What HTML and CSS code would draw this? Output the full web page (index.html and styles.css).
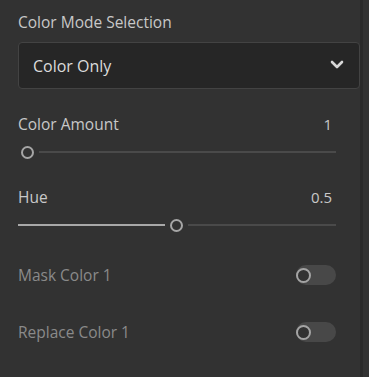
FILE: index.html
```html
<!DOCTYPE html>
<html lang="en">
<head>
    <meta charset="UTF-8">
    <title>Color Mode Panel</title>
    <link rel="stylesheet" href="styles.css">
</head>
<body>
    <div class="panel">
        <!-- Color mode dropdown -->
        <div class="field">
            <div class="label">Color Mode Selection</div>
            <div class="dropdown">
                <span>Color Only</span>
                <svg class="chevron" width="14" height="9" viewBox="0 0 14 9">
                    <path d="M2 2 L7 7 L12 2" fill="none" stroke="#d8d8d8" stroke-width="2.6" stroke-linecap="round" stroke-linejoin="round"/>
                </svg>
            </div>
        </div>

        <!-- Color amount slider -->
        <div class="slider-field">
            <div class="slider-head">
                <span class="label">Color Amount</span>
                <span class="value">1</span>
            </div>
            <div class="slider at-start">
                <div class="track filled" style="width: 0px"></div>
                <div class="thumb"></div>
                <div class="track"></div>
            </div>
        </div>

        <!-- Hue slider -->
        <div class="slider-field">
            <div class="slider-head">
                <span class="label">Hue</span>
                <span class="value">0.5</span>
            </div>
            <div class="slider">
                <div class="track filled" style="width: 147px"></div>
                <div class="thumb"></div>
                <div class="track"></div>
            </div>
        </div>

        <!-- Toggles -->
        <div class="toggle-row">
            <span class="label disabled">Mask Color 1</span>
            <div class="switch"><div class="knob"></div></div>
        </div>
        <div class="toggle-row">
            <span class="label disabled">Replace Color 1</span>
            <div class="switch"><div class="knob"></div></div>
        </div>
    </div>
    <div class="divider"></div>
</body>
</html>
```

FILE: styles.css
```css
body {
    margin: 0;
    height: 377px;
    background-color: #323232;
    font-family: "Open Sans", sans-serif;
    display: flex;
    overflow: hidden;
}

.panel {
    width: 342px;
    padding: 12px 0 0 18px;
    display: flex;
    flex-direction: column;
}

.divider {
    width: 3px;
    background-color: #2a2a2a;
}

.label {
    font-size: 15.5px;
    color: #c8c8c8;
    line-height: 20px;
}

.label.disabled {
    color: #8a8a8a;
}

.field {
    margin-bottom: 25px;
}

.dropdown {
    margin-top: 10px;
    height: 45px;
    background-color: #262626;
    border: 1px solid #434343;
    border-radius: 4px;
    display: flex;
    align-items: center;
    justify-content: space-between;
    padding: 0 15px 0 14px;
    font-size: 16px;
    color: #dcdcdc;
}

.chevron {
    margin-top: -3px;
}

.slider-field {
    width: 318px;
    margin-bottom: 28px;
}

.slider-head {
    display: flex;
    justify-content: space-between;
    padding-right: 4px;
}

.value {
    font-size: 15px;
    color: #c8c8c8;
    line-height: 20px;
}

.slider {
    margin-top: 11px;
    height: 14px;
    display: flex;
    align-items: center;
}

.slider.at-start {
    padding-left: 3px;
}

.track {
    flex: 1;
    height: 2px;
    background-color: #4a4a4a;
    margin-left: 5px;
}

.track.filled {
    flex: none;
    background-color: #a8a8a8;
    margin: 0 5px 0 0;
}

.slider.at-start .track.filled {
    margin: 0;
}

.thumb {
    width: 9px;
    height: 9px;
    border: 2px solid #a6a6a6;
    border-radius: 50%;
    background-color: #323232;
    flex: none;
}

.toggle-row {
    width: 318px;
    height: 20px;
    display: flex;
    justify-content: space-between;
    align-items: center;
    margin-top: 5px;
}

.toggle-row + .toggle-row {
    margin-top: 37px;
}

.switch {
    width: 40px;
    height: 20px;
    border-radius: 10px;
    background-color: #484848;
    display: flex;
    align-items: center;
}

.knob {
    width: 11px;
    height: 11px;
    border: 2.5px solid #a4a4a4;
    border-radius: 50%;
    background-color: #323232;
}
```
